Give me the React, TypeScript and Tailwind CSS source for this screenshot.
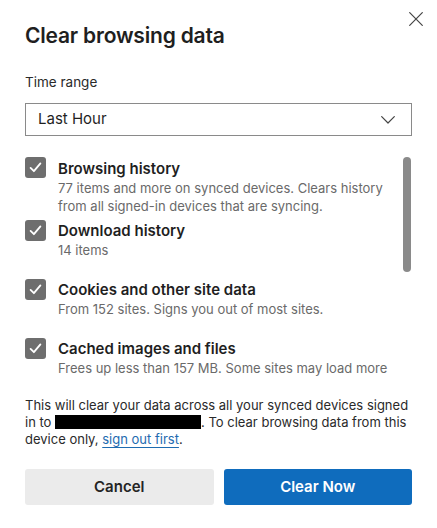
import React from "react";

function Check() {
  return (
    <div className="w-[21px] h-[21px] shrink-0 rounded-[3px] bg-[#6e6e6e] flex items-center justify-center">
      <svg width="21" height="21" viewBox="0 0 21 21" fill="none">
        <path d="M5.6 10.9 L8.9 14.2 L15.4 6.4" stroke="#ffffff" strokeWidth="1.8" strokeLinecap="round" strokeLinejoin="round" />
      </svg>
    </div>
  );
}

function Item({ title, desc }: { title: string; desc: string }) {
  return (
    <div className="flex shrink-0 items-start gap-[12px] min-h-[54px]">
      <Check />
      <div className="flex-1 pt-[1.5px]">
        <div className="text-[15px] leading-[20px] font-semibold text-[#1f1f1f]">{title}</div>
        <div className="text-[13px] leading-[18px] text-[#6a6a6a]">{desc}</div>
      </div>
    </div>
  );
}

export default function App() {
  return (
    <div className="relative w-[437px] h-[528px] bg-white overflow-hidden" style={{ fontFamily: "Inter, 'Liberation Sans', sans-serif" }}>
      <button className="absolute top-[12px] right-[14px] w-[14px] h-[14px]">
        <svg width="14" height="14" viewBox="0 0 14 14" fill="none">
          <path d="M0.7 0.7 L13.3 13.3 M13.3 0.7 L0.7 13.3" stroke="#444444" strokeWidth="1.2" strokeLinecap="round" />
        </svg>
      </button>
      <div className="px-[25px] flex flex-col">
        <h1 className="mt-[22px] text-[21px] leading-[28px] font-semibold text-[#1f1f1f] tracking-[-0.2px]">Clear browsing data</h1>
        <div className="mt-[23px] text-[13.5px] leading-[18px] text-[#2a2a2a]">Time range</div>
        <div className="mt-[12px] h-[33px] border border-[#8a8a8a] flex items-center justify-between pl-[12px] pr-[16px]">
          <span className="text-[15px] text-[#1f1f1f]">Last Hour</span>
          <svg width="14" height="8" viewBox="0 0 14 8" fill="none">
            <path d="M0.7 0.7 L7 7 L13.3 0.7" stroke="#444444" strokeWidth="1.2" strokeLinecap="round" strokeLinejoin="round" />
          </svg>
        </div>
        <div className="mt-[21px] h-[220px] overflow-hidden flex gap-[5px]">
          <div className="flex-1 flex flex-col gap-[5px]">
            <Item title="Browsing history" desc="77 items and more on synced devices. Clears history from all signed-in devices that are syncing." />
            <Item title="Download history" desc="14 items" />
            <Item title="Cookies and other site data" desc="From 152 sites. Signs you out of most sites." />
            <Item title="Cached images and files" desc="Frees up less than 157 MB. Some sites may load more" />
          </div>
          <div className="w-[8px] mr-[1px] shrink-0">
            <div className="h-[115px] rounded-full bg-[#8a8a8a]" />
          </div>
        </div>
        <p className="mt-[20px] text-[13px] leading-[17px] text-[#2a2a2a]">
          This will clear your data across all your synced devices signed in to{" "}
          <span className="inline-block w-[146px] h-[14px] bg-black align-[-2px]" />. To clear browsing data from this device only,{" "}
          <a className="text-[#1e6bb0] underline underline-offset-[3px] decoration-[1px]">sign out first</a>.
        </p>
        <div className="mt-[21px] flex gap-[10px]">
          <button className="flex-1 h-[36px] rounded-[3px] bg-[#ebebeb] text-[15px] font-semibold text-[#242424]">Cancel</button>
          <button className="flex-1 h-[36px] rounded-[3px] bg-[#0f6cbd] text-[15px] font-semibold text-white">Clear Now</button>
        </div>
      </div>
    </div>
  );
}
